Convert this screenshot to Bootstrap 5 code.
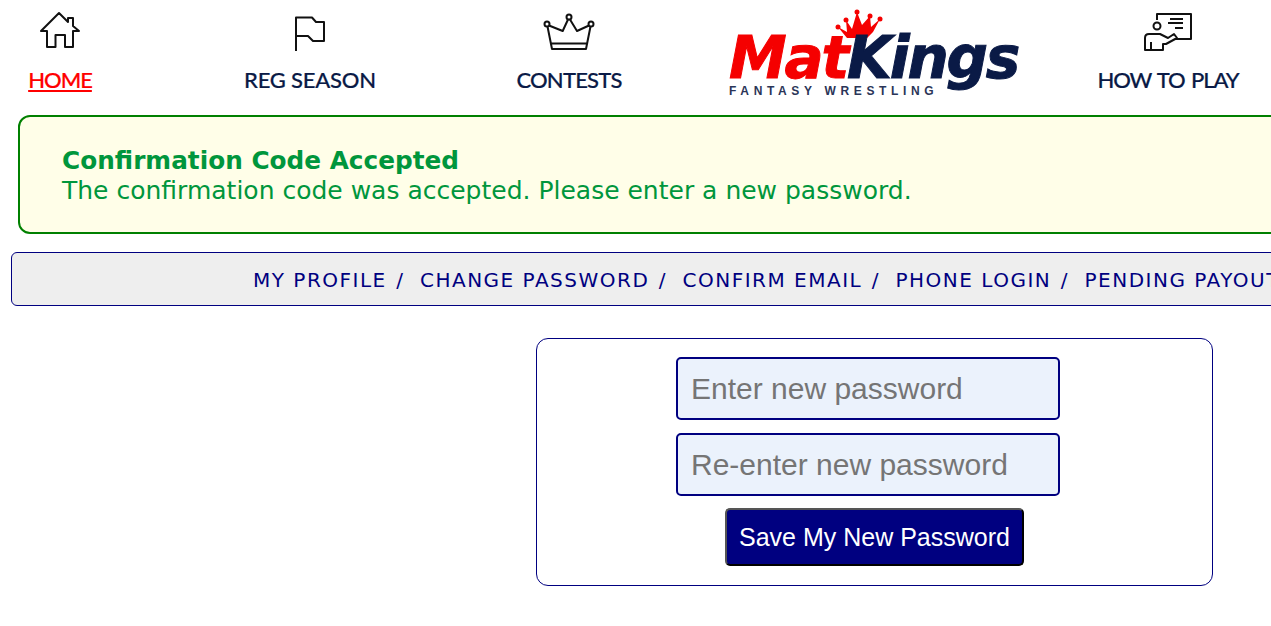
<!DOCTYPE html>
<html>
<head>
  <meta charset="UTF-8">
  <title>MatKings Fantasy Wrestling</title>
  <link href="https://cdn.jsdelivr.net/npm/bootstrap@5.3.0/dist/css/bootstrap.min.css" rel="stylesheet">
  <style>
    html, body {
      overflow: hidden;
    }
    body {
      background: #fff;
      width: 1271px;
    }
    .top-menu {
      display: grid;
      grid-template-columns: 120px 380px 138px 474px 112px;
      height: 100px;
    }
    .menu-item {
      display: flex;
      flex-direction: column;
      align-items: center;
      white-space: nowrap;
      font-family: "Lato", sans-serif;
      font-size: 22px;
      letter-spacing: -0.2px;
      line-height: 28px;
      font-weight: 500;
      color: #0a1a46;
      text-decoration: none;
      -webkit-text-stroke: 0.2px #0a1a46;
    }
    .menu-item.is-current {
      color: #f00;
      letter-spacing: -1px;
      text-decoration: underline;
      -webkit-text-stroke: 0.2px #f00;
    }
    .menu-item.is-tight {
      letter-spacing: -0.8px;
    }
    .menu-item.is-wordy {
      letter-spacing: -1.1px;
      word-spacing: 2px;
    }
    .menu-icon {
      display: block;
      flex: none;
      width: 44px;
      height: 44px;
      margin-top: 10px;
      margin-bottom: 12px;
      overflow: visible;
      fill: none;
      stroke: #111;
      stroke-width: 2;
      stroke-linejoin: round;
    }
    .logo-box {
      position: relative;
      width: 292px;
      height: 100px;
      justify-self: center;
      text-decoration: none;
    }
    .logo-name {
      position: absolute;
      left: 0;
      top: 31px;
      font-family: "DejaVu Sans", sans-serif;
      font-size: 58px;
      line-height: 54px;
      font-weight: 700;
      font-style: italic;
      letter-spacing: -2.2px;
      white-space: nowrap;
      color: #f50000;
      -webkit-text-stroke: 1px #f50000;
    }
    .logo-name span {
      color: #0a1a46;
      -webkit-text-stroke: 1px #0a1a46;
    }
    .logo-sub {
      position: absolute;
      left: 0;
      top: 85px;
      font-family: "Liberation Sans", sans-serif;
      font-size: 12px;
      line-height: 12px;
      font-weight: 700;
      letter-spacing: 4.65px;
      white-space: nowrap;
      color: #2b3558;
    }
    .logo-crown {
      position: absolute;
      left: 100px;
      top: 5px;
      width: 60px;
      height: 35px;
      fill: #f50000;
    }
    .notice-box {
      width: 1400px;
      height: 119px;
      margin: 15px 0 0 18px;
      padding: 29px 42px;
      border: 2px solid #008000;
      border-radius: 12px;
      background: #fffee8;
      color: #00963c;
      font-family: "DejaVu Sans", sans-serif;
      font-size: 25px;
      line-height: 30px;
    }
    .notice-box strong {
      display: block;
      font-size: 24.75px;
      font-weight: 700;
    }
    .sub-menu {
      display: flex;
      width: 1500px;
      height: 54px;
      margin: 18px 0 0 11px;
      padding: 2px 0 0 241px;
      align-items: center;
      gap: 12.5px;
      border: 1px solid #000080;
      border-radius: 6px;
      background: #eee;
      font-family: "DejaVu Sans", sans-serif;
      font-size: 20px;
      letter-spacing: 1.5px;
      white-space: nowrap;
    }
    .sub-menu a {
      color: #000080;
      text-decoration: none;
    }
    .sub-menu i {
      margin: 0 3px 0 -3px;
      color: #000080;
      font-style: normal;
    }
    .pass-box {
      width: 677px;
      height: 248px;
      margin: 32px 0 0 536px;
      padding-top: 18px;
      border: 1px solid #000080;
      border-radius: 12px;
    }
    .pass-input {
      display: block;
      width: 384px;
      height: 63px;
      margin: 0 0 13px 139px;
      padding: 0 13px;
      border: 2px solid #000080;
      border-radius: 5px;
      background: #ebf2fc;
      font-family: "Liberation Sans", sans-serif;
      font-size: 30px;
    }
    .pass-input::placeholder {
      color: #757575;
      opacity: 1;
    }
    .pass-btn {
      display: block;
      width: 299px;
      height: 58px;
      margin: -1px 0 0 188px;
      padding: 1px 0 0;
      border: 2px solid;
      border-color: #555 #000 #000 #555;
      border-radius: 5px;
      background: #000080;
      color: #fff;
      font-family: "Liberation Sans", sans-serif;
      font-size: 25px;
    }
    .pass-btn:hover {
      background: #000080;
      color: #fff;
    }
  </style>
</head>
<body>
  <nav class="top-menu">
    <a class="menu-item is-current" href="#">
      <svg class="menu-icon" viewBox="0 0 44 44"><path d="M21 3 3 21h6v16h8.500V25H27v12h8V21h6l-6-5V8h-5v4z"/></svg>
      HOME
    </a>
    <a class="menu-item" href="#">
      <svg class="menu-icon" viewBox="0 0 44 44"><path d="M8 41V7.500h16l4 4.500h8v19H25l-5-5H8"/></svg>
      REG SEASON
    </a>
    <a class="menu-item is-tight" href="#">
      <svg class="menu-icon" viewBox="0 0 44 44"><path d="M2 15.500 15.700 21 21 9.500M23 9.500 30 21l12-5.500M.5 16.500 5 39h34l4.500-22.500M4 33.500h36"/><circle cx="22" cy="7" r="2.500"/><circle cx="0" cy="14" r="2.500"/><circle cx="44" cy="14" r="2.500"/></svg>
      CONTESTS
    </a>
    <a class="logo-box" href="#" aria-label="MatKings">
      <svg class="logo-crown" viewBox="0 0 60 35"><path d="M9 22l9 5-1-12 6 9 5-17 5 13 8-9 1 11 9-8-7 13-6 6H18z"/><circle cx="28" cy="7" r="2.500"/><circle cx="17" cy="15" r="2.500"/><circle cx="9" cy="22" r="2.500"/><circle cx="41" cy="11" r="2.500"/><circle cx="51" cy="14" r="2.500"/></svg>
      <div class="logo-name">Mat<span>Kings</span></div>
      <div class="logo-sub">FANTASY WRESTLING</div>
    </a>
    <a class="menu-item is-wordy" href="#">
      <svg class="menu-icon" viewBox="0 0 44 44"><path d="M11 10V4h34v25H29M24 9h13M22 13h15M29 18h8"/><circle cx="11" cy="16" r="3.500"/><path d="M-1 40V28q0-4 4-4h11l8 4 6-4 3 4-11 6h-3v6zM5 32v8"/></svg>
      HOW TO PLAY
    </a>
  </nav>

  <div class="notice-box">
    <strong>Confirmation Code Accepted</strong>
    The confirmation code was accepted. Please enter a new password.
  </div>

  <div class="sub-menu">
    <a href="#">MY PROFILE</a><i>/</i>
    <a href="#">CHANGE PASSWORD</a><i>/</i>
    <a href="#">CONFIRM EMAIL</a><i>/</i>
    <a href="#">PHONE LOGIN</a><i>/</i>
    <a href="#">PENDING PAYOUTS</a>
  </div>

  <form class="pass-box">
    <input class="pass-input" type="password" placeholder="Enter new password">
    <input class="pass-input" type="password" placeholder="Re-enter new password">
    <button class="btn pass-btn" type="button">Save My New Password</button>
  </form>

  <script src="https://cdn.jsdelivr.net/npm/bootstrap@5.3.0/dist/js/bootstrap.bundle.min.js"></script>
</body>
</html>
